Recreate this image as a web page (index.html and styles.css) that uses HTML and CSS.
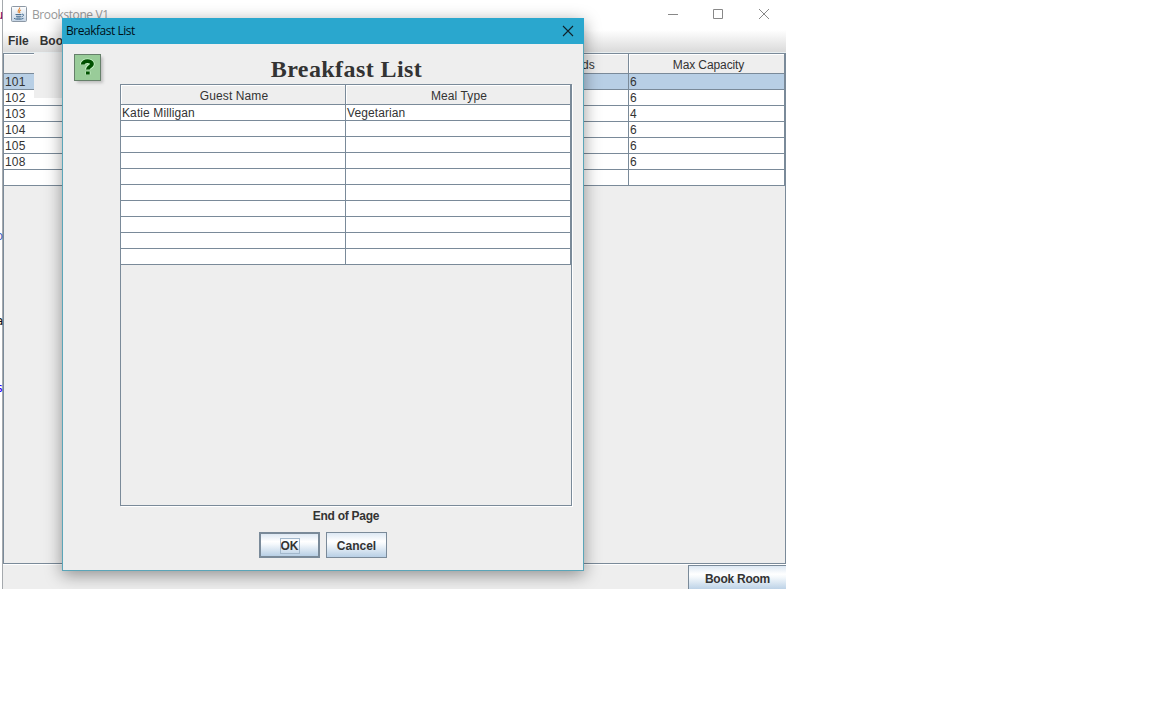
FILE: index.html
```html
<!DOCTYPE html>
<html lang="en">
<head>
<meta charset="utf-8">
<title>Brookstone V1</title>
<link rel="stylesheet" href="styles.css">
</head>
<body>
<div class="desktop">
  <div class="editor">
    <span class="frag frag-u">u</span><span class="frag frag-o">o</span><span class="frag frag-a">a</span><span class="frag frag-s">s</span>
  </div>
  <main class="window">
    <header class="titlebar">
      <svg class="java" width="16" height="16" viewBox="0 0 16 16">
        <defs><linearGradient id="g" x2="0" y2="1"><stop stop-color="#fff"/><stop offset="1" stop-color="#c3d3e4"/></linearGradient></defs>
        <rect x=".5" y=".5" width="15" height="15" rx="1" fill="url(#g)" stroke="#8c98a5"/>
        <path d="M8.6 1.500c.8 2-3 2.700-1.200 5.500M10 4C8 5 8.200 5.700 9 7.200" fill="none" stroke="#e28a3d" stroke-width="1.100"/>
        <path d="M4.500 8.500h6M5 10.300h5M11 8.200c2.500-.3 2 2-.5 2.600M3 12.300c1.500 1.300 7.500 1.300 9.500 0M5.500 12h4" fill="none" stroke="#4a7193" stroke-width="1"/>
      </svg>
      <span class="title">Brookstone V1</span>
      <svg class="controls" width="104" height="12" viewBox="0 0 104 12" fill="none" stroke="#888">
        <path d="M0 6.500h10M45.500 1.500h9v9h-9zM91 1l10 10M101 1L91 11"/>
      </svg>
    </header>
    <nav class="menubar"><span class="file">File</span><span class="book">Book</span></nav>
    <section class="rooms">
      <div class="row head"><span></span><span class="beds"><b>Beds</b></span><span class="cap"><i>Max Capacity</i></span></div>
      <div class="row selected"><span>101</span><span></span><span>6</span></div>
      <div class="row"><span>102</span><span></span><span>6</span></div>
      <div class="row"><span>103</span><span></span><span>4</span></div>
      <div class="row"><span>104</span><span></span><span>6</span></div>
      <div class="row"><span>105</span><span></span><span>6</span></div>
      <div class="row"><span>108</span><span></span><span>6</span></div>
      <div class="row"><span></span><span></span><span></span></div>
    </section>
    <footer class="footer"><button class="book-room"><span>Book Room</span></button></footer>
  </main>
  <div class="patch"></div>
  <section class="dialog">
    <header class="dialog-title"><span>Breakfast List</span>
      <svg width="12" height="12" viewBox="0 0 12 12" fill="none" stroke="#10222a" stroke-width="1.100"><path d="M1 1l10 10M11 1L1 11"/></svg>
    </header>
    <div class="dialog-body">
      <svg class="question" width="34" height="34" viewBox="0 0 34 34">
        <rect x="3" y="3" width="26" height="26" fill="#aaa" class="soft"/>
        <rect x=".5" y=".5" width="26" height="26" fill="#99cc99" stroke="#66806a"/>
        <g fill="none">
          <path class="halo" d="M8.700 10.600C8.700 6.200 18 6.200 18 10C18 12.500 13.800 12.600 13.800 15.600M13.800 17.600v3"/>
          <path class="mark" d="M8.700 10.600C8.700 6.200 18 6.200 18 10C18 12.500 13.800 12.600 13.800 15.600M13.800 17.600v3"/>
        </g>
      </svg>
      <div class="content">
        <h1><span>Breakfast List</span></h1>
        <div class="meals">
          <div class="meal head"><span><i>Guest Name</i></span><span><i>Meal Type</i></span></div>
          <div class="meal"><span>Katie Milligan</span><span>Vegetarian</span></div>
          <div class="meal"><span></span><span></span></div>
          <div class="meal"><span></span><span></span></div>
          <div class="meal"><span></span><span></span></div>
          <div class="meal"><span></span><span></span></div>
          <div class="meal"><span></span><span></span></div>
          <div class="meal"><span></span><span></span></div>
          <div class="meal"><span></span><span></span></div>
          <div class="meal"><span></span><span></span></div>
          <div class="meal"><span></span><span></span></div>
        </div>
        <div class="end">End of Page</div>
      </div>
    </div>
    <div class="actions"><button class="ok"><span>OK</span></button><button><span>Cancel</span></button></div>
  </section>
</div>
</body>
</html>
```
FILE: styles.css
```css
* { box-sizing: border-box; }
body { margin: 0; background: #fff; color: #333; font: 12px/14px "Liberation Sans", Arial, sans-serif; }
i { font-style: normal; }
b { font-weight: normal; }
.desktop { position: relative; display: flex; width: 786px; height: 589px; overflow: hidden; }
.editor { position: relative; flex: none; width: 2px; background: #fff; }
.frag { position: absolute; left: -4px; z-index: 1; font: 12px/14px "DejaVu Sans Mono", monospace; }
.frag-u { top: 8px; color: #7f0055; }
.frag-o { top: 229px; color: #3f5fbf; }
.frag-a { top: 314px; color: #111; }
.frag-s { top: 381px; color: #2a00ff; }
.window { flex: 1; display: flex; flex-direction: column; background: #eee; border-left: 1px solid #a5a9ad; }
.titlebar { flex: none; display: flex; align-items: center; height: 30px; padding: 0 14px 2px 8px; background: #fff; }
.title { margin: 2px 0 0 5px; color: #999; font: 12px/16px "Open Sans", sans-serif; letter-spacing: -.4px; }
.controls { margin-left: auto; }
.menubar { flex: none; height: 23px; padding: 4px 5px; background: linear-gradient(#fff, #dadada); border-bottom: 1px solid #e8eef0; font-weight: bold; display: flex; gap: 11px; }
.rooms { height: 511px; flex: none; border: 1px solid #7a8a99; background: #eee; }
.row { display: grid; grid-template-columns: 390px 235px 156px; width: 781px; height: 16px; background: #fff; border-bottom: 1px solid #7a8a99; line-height: 17px; }
.row span { padding-left: 1px; border-right: 1px solid #7a8a99; height: 15px; white-space: nowrap; letter-spacing: .2px; }
.row.head { height: 20px; background: #eee; line-height: 22px; box-shadow: inset 0 1px #fff; }
.row.head span { height: 19px; }
.row .beds { text-align: right; padding-right: 33px; }
.row .cap { text-align: center; padding-left: 4px; letter-spacing: -.1px; box-shadow: inset 1px 1px #fff; }
.row.selected { background: #b8cfe5; }
.footer { display: flex; justify-content: flex-end; height: 25px; border-top: 1px solid #fff; }
button { font: bold 12px/14px "Liberation Sans", Arial, sans-serif; color: #333; padding: 2px 0 0; border: 1px solid #7a8a99; border-radius: 0; background: linear-gradient(#dde8f3 0, #fff 34%, #f5f9fc 46%, #b8cfe5 100%); }
.book-room { width: 98px; height: 26px; flex: none; border-right: 0; letter-spacing: -.25px; }
.patch { position: absolute; left: 34px; top: 53px; width: 30px; height: 45px; background: #eee; }
.dialog { position: absolute; left: 62px; top: 18px; width: 522px; height: 553px; background: #eee; border: 1px solid #5ba5b8; box-shadow: 0 4px 16px rgba(0,0,0,.4); }
.dialog-title { margin: -1px -1px 0; padding: 0 10px 0 4px; background: #2aa7ce; color: #001018; display: flex; align-items: center; justify-content: space-between; height: 26px; font: 12px/16px "Open Sans", sans-serif; letter-spacing: -.47px; }
.dialog-body { display: flex; padding: 10px 11px 0 11px; }
.question { flex: none; }
.soft { filter: blur(1.5px); opacity: .7; }
.halo { stroke: #c9f5c9; stroke-width: 5.400; }
.mark { stroke: #005000; stroke-width: 3.800; }
.content { width: 452px; margin-left: 12px; flex: none; }
h1 { margin: 0; height: 30px; font: bold 24px/30px "Liberation Serif", serif; text-align: center; letter-spacing: .42px; padding-left: 1px; }
.meals { width: 452px; height: 422px; border: 1px solid #7a8a99; box-shadow: 1px 1px #fff; }
.meal { display: grid; grid-template-columns: 225px 225px; width: 450px; height: 16px; background: #fff; border-bottom: 1px solid #7a8a99; line-height: 17px; }
.meal span { padding-left: 1px; border-right: 1px solid #7a8a99; letter-spacing: .1px; height: 15px; }
.meal.head { height: 20px; background: #eee; text-align: center; line-height: 22px; }
.meal.head span { height: 19px; padding-left: 2px; box-shadow: inset 1px 1px #fff; }
.end { padding-top: 3px; font-weight: bold; text-align: center; letter-spacing: -.25px; }
.actions { display: flex; gap: 6px; padding-left: 196px; margin-top: 9px; }
.actions button { width: 61px; height: 26px; }
.actions .ok { border-width: 2px; }
.ok span { outline: 1px solid #a3b8cc; }
```
